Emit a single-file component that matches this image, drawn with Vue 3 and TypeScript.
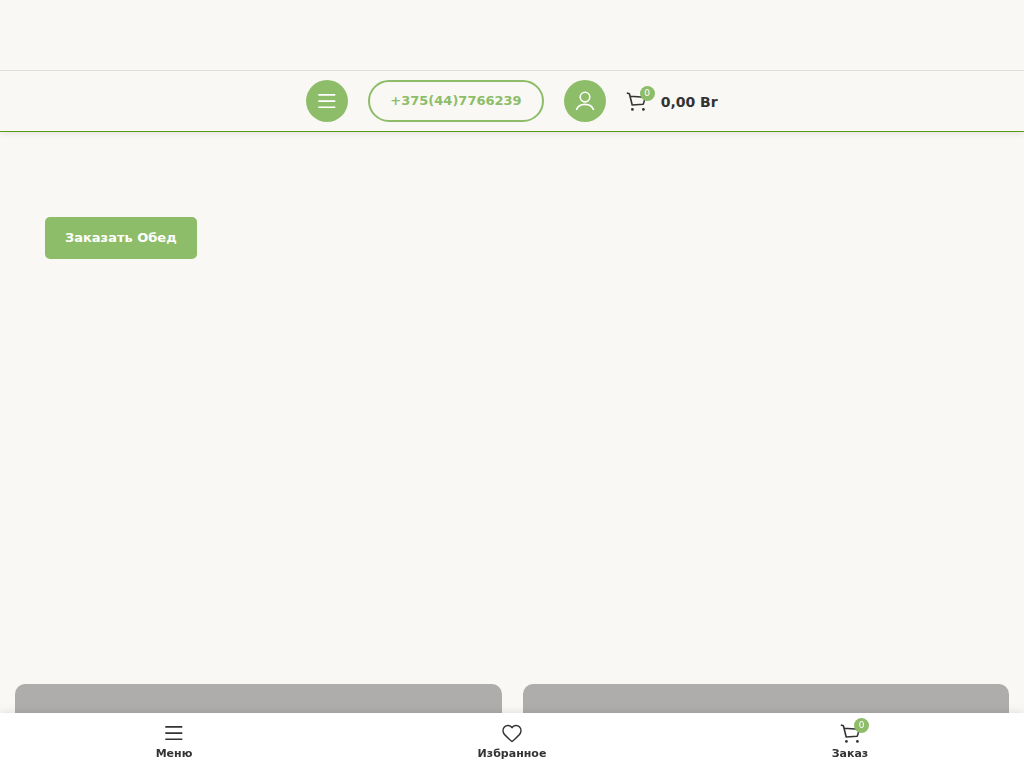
<script setup lang="ts">
import { ref } from 'vue'

const cartCount = ref<number>(0)
const cartTotal = ref<string>('0,00 Br')
const categories: number[] = [1, 2]
</script>

<template>
  <div class="page">
    <header class="header">
      <div class="header-top"></div>
      <div class="header-main">
        <button class="round" type="button" aria-label="Меню">
          <svg class="icon" viewBox="0 0 20 20" aria-hidden="true">
            <path d="M1.3 3.9H18.3M1.3 10.1H18.3M1.3 16.2H18.3" />
          </svg>
        </button>
        <a class="phone" href="tel:+375447766239">+375(44)7766239</a>
        <a class="round" href="#account" aria-label="Мой аккаунт">
          <svg class="icon" viewBox="0 0 20 20" aria-hidden="true">
            <circle cx="10" cy="6.1" r="4.8" />
            <path d="M1.4 19C2.5 15.6 5.8 13.4 10 13.4S17.5 15.6 18.6 19" />
          </svg>
        </a>
        <a class="cart" href="#cart">
          <span class="icon-wrap">
            <svg class="icon" viewBox="0 0 20 20" aria-hidden="true">
              <path d="M.8 2L3.4 2.7L6.2 14L17.2 13.3C18.1 11.2 18.7 8.7 18.9 6.2L4 5.2" />
              <circle class="dot" cx="6.4" cy="18.4" r="1.4" />
              <circle class="dot" cx="17.4" cy="18.4" r="1.4" />
            </svg>
            <span class="badge">{{ cartCount }}</span>
          </span>
          <span class="total">{{ cartTotal }}</span>
        </a>
      </div>
    </header>

    <main>
      <section class="hero">
        <a class="order" href="#order">Заказать Обед</a>
      </section>
      <section class="cards">
        <div v-for="id in categories" :key="id" class="card"></div>
      </section>
    </main>

    <nav class="toolbar">
      <a class="tool" href="#menu">
        <span class="icon-wrap">
          <svg class="icon" viewBox="0 0 20 20" aria-hidden="true">
            <path d="M1.3 3.9H18.3M1.3 10.1H18.3M1.3 16.2H18.3" />
          </svg>
        </span>
        <span class="label">Меню</span>
      </a>
      <a class="tool" href="#wishlist">
        <span class="icon-wrap">
          <svg class="icon" viewBox="0 0 20 20" aria-hidden="true">
            <path d="M10 18.4C9.4 18.4 3.7 13 2.5 11.6C.6 9.2.6 5.8 2.6 3.8C4.7 1.7 8.1 2.1 10 4.6C11.9 2.1 15.3 1.7 17.4 3.8C19.4 5.8 19.4 9.2 17.5 11.6C16.3 13 10.6 18.4 10 18.4Z" />
          </svg>
        </span>
        <span class="label">Избранное</span>
      </a>
      <a class="tool" href="#cart">
        <span class="icon-wrap">
          <svg class="icon" viewBox="0 0 20 20" aria-hidden="true">
            <path d="M.8 2L3.4 2.7L6.2 14L17.2 13.3C18.1 11.2 18.7 8.7 18.9 6.2L4 5.2" />
            <circle class="dot" cx="6.4" cy="18.4" r="1.4" />
            <circle class="dot" cx="17.4" cy="18.4" r="1.4" />
          </svg>
          <span class="badge">{{ cartCount }}</span>
        </span>
        <span class="label">Заказ</span>
      </a>
    </nav>
  </div>
</template>

<style>
body {
  margin: 0;
  background: #f9f8f4;
}
</style>

<style scoped>
.page {
  height: 100vh;
  overflow: hidden;
  background: #f9f8f4;
  color: #333;
  font-family: "DejaVu Sans", sans-serif;
  font-size: 14px;
}
.page * {
  box-sizing: border-box;
}
a {
  color: inherit;
  text-decoration: none;
}
.header {
  position: relative;
  border-bottom: 1px solid #569c10;
  box-shadow: 0 1px 8px rgba(0, 0, 0, 0.1);
}
.header-top {
  height: 71px;
  border-bottom: 1px solid #dfdedb;
}
.header-main {
  display: flex;
  align-items: center;
  justify-content: center;
  gap: 20px;
  height: 60px;
}
.round {
  display: flex;
  align-items: center;
  justify-content: center;
  width: 42px;
  height: 42px;
  padding: 0;
  border: 0;
  border-radius: 50%;
  background: #8ebd69;
  color: #fff;
}
.icon {
  display: block;
  width: 20px;
  height: 20px;
  fill: none;
  stroke: currentColor;
  stroke-width: 1.6;
  stroke-linejoin: round;
  stroke-linecap: butt;
}
.dot {
  fill: currentColor;
  stroke: none;
}
.phone {
  display: flex;
  align-items: center;
  height: 42px;
  padding: 0 20px 2px;
  border: 2px solid #8ebd69;
  border-radius: 21px;
  color: #8ebd69;
  font-size: 13px;
  font-weight: 700;
}
.cart {
  display: flex;
  align-items: center;
  gap: 15px;
  height: 42px;
}
.icon-wrap {
  position: relative;
  display: block;
}
.badge {
  position: absolute;
  top: -5px;
  right: -9px;
  width: 15px;
  height: 15px;
  border-radius: 50%;
  background: #8ebd69;
  color: #fff;
  font-size: 9px;
  line-height: 15px;
  text-align: center;
}
.total {
  padding-top: 2px;
  font-weight: 700;
}
.hero {
  height: 552px;
  padding: 85px 45px 0;
}
.order {
  display: inline-flex;
  align-items: center;
  height: 42px;
  padding: 0 20px 2px;
  border-radius: 5px;
  background: #8ebd69;
  color: #fff;
  font-size: 13px;
  font-weight: 700;
}
.cards {
  display: grid;
  grid-template-columns: 1fr 1fr;
  gap: 21px;
  padding: 0 15px;
}
.card {
  height: 200px;
  border-radius: 10px;
  background: #aeadab;
}
.toolbar {
  position: fixed;
  right: 0;
  bottom: 0;
  left: 0;
  display: flex;
  height: 55px;
  padding: 5px;
  box-sizing: border-box;
  background: #fff;
  box-shadow: 0 0 9px rgba(0, 0, 0, 0.12);
}
.tool {
  display: flex;
  flex: 1;
  flex-direction: column;
  align-items: center;
  padding-top: 5px;
}
.label {
  padding-top: 4px;
  font-size: 11px;
  font-weight: 700;
  line-height: 14px;
}
</style>
